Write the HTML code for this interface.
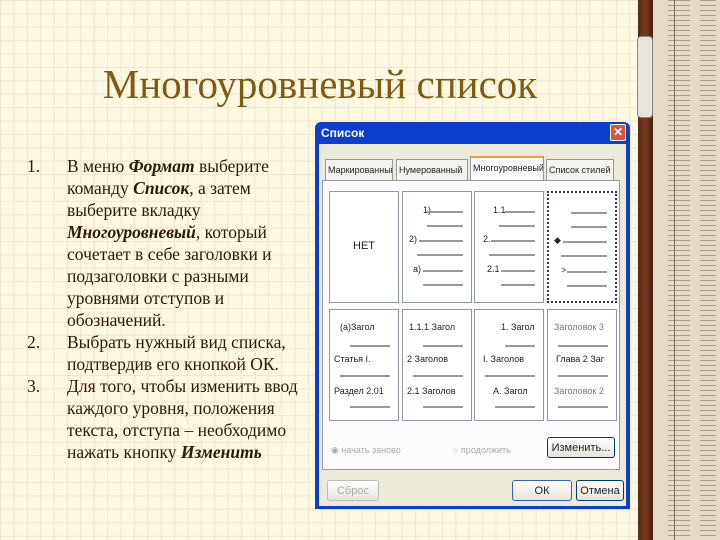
<!DOCTYPE html>
<html><head><meta charset="utf-8"><style>
*{margin:0;padding:0;box-sizing:border-box}
body{width:720px;height:540px;overflow:hidden;position:relative;
background-color:#fff8e3;
background-image:linear-gradient(#efe5c9 1px,transparent 1px),linear-gradient(90deg,#efe5c9 1px,transparent 1px);
background-size:13.4px 13.4px;font-family:"Liberation Serif",serif}
.title{position:absolute;left:0;width:640px;top:60px;text-align:center;font-size:41px;color:#7d5c12}
.list{position:absolute;left:0;top:155px;font-size:17.5px;line-height:22px;color:#2a1a08}
.row{position:relative;padding-left:67px;white-space:nowrap}
.row span.n{position:absolute;left:27px}
.dlg{position:absolute;left:315px;top:122px;width:315px;height:387px;background:#0a3fd0;border-radius:6px 6px 0 0}
.tb{height:22px;color:#fff;font:bold 12px "Liberation Sans",sans-serif;padding:4px 6px}
.x{position:absolute;right:4px;top:2px;width:16px;height:17px;background:#d8553a;border:1px solid #fff;border-radius:2px;color:#fff;font:bold 12px sans-serif;text-align:center}
.in{position:absolute;left:4px;top:22px;right:4px;bottom:3px;background:#ece9d8;font-family:"Liberation Sans",sans-serif;font-size:9px;color:#222}
.tab{position:absolute;top:15px;height:22px;border:1px solid #919b9c;border-bottom:none;background:#f4f3ee;padding:5px 2px;white-space:nowrap;overflow:hidden}
.panel{position:absolute;left:3px;top:36px;width:298px;height:290px;background:#fcfcfe;border:1px solid #919b9c}
.c{position:absolute;background:#fff;border:1px solid #8a9aa6;width:70px;height:112px}
.l{position:absolute;height:2px;background:#999;right:8px}
.btn{position:absolute;border:1px solid #003c74;border-radius:3px;background:linear-gradient(#fff,#e6e3d8);text-align:center;font-size:11px;line-height:20px;height:21px}
.ruler{position:absolute;left:638px;top:0;width:82px;height:540px;background:#e6dcc6}
.brown{position:absolute;left:638px;top:0;width:15px;height:540px;background:linear-gradient(90deg,#5a2a18,#7a3a22,#4a2010)}
.ticks{position:absolute;left:668px;top:0;width:22px;height:540px;background-image:repeating-linear-gradient(#a89d8a 0 1px,transparent 1px 5px)}
.ticks2{position:absolute;left:700px;top:0;width:16px;height:540px;background-image:repeating-linear-gradient(#a89d8a 0 1px,transparent 1px 5px)}
</style></head><body>
<div class="title">Многоуровневый список</div>
<div class="list">
<div class="row"><span class="n">1.</span>В меню <b><i>Формат</i></b> выберите<br>команду <b><i>Список</i></b>, а затем<br>выберите вкладку<br><b><i>Многоуровневый</i></b>, который<br>сочетает в себе заголовки и<br>подзаголовки с разными<br>уровнями отступов и<br>обозначений.</div>
<div class="row"><span class="n">2.</span>Выбрать нужный вид списка,<br>подтвердив его кнопкой ОК.</div>
<div class="row"><span class="n">3.</span>Для того, чтобы изменить ввод<br>каждого уровня, положения<br>текста, отступа – необходимо<br>нажать кнопку <b><i>Изменить</i></b></div>
</div>
<div class="dlg"><div class="tb">Список</div><div class="x">✕</div>
<div class="in">
<div class="tab" style="left:6px;width:68px">Маркированный</div>
<div class="tab" style="left:77px;width:72px">Нумерованный</div>
<div class="tab" style="left:151px;width:74px;top:12px;height:25px;background:#fcfcfe;border-top:2px solid #f0a030">Многоуровневый</div>
<div class="tab" style="left:227px;width:68px">Список стилей</div>
<div class="panel">
<div class="c" style="left:6px;top:10px"><div style="position:absolute;top:48px;width:100%;text-align:center;font-size:11px">НЕТ</div></div>
<div class="c" style="left:79px;top:10px"><span style="position:absolute;left:20px;top:13px">1)</span><div class="l" style="top:19px;width:36px"></div><div class="l" style="top:33px;width:36px"></div><span style="position:absolute;left:6px;top:42px">2)</span><div class="l" style="top:48px;width:44px"></div><div class="l" style="top:62px;width:46px"></div><span style="position:absolute;left:10px;top:72px">a)</span><div class="l" style="top:78px;width:40px"></div><div class="l" style="top:92px;width:40px"></div></div>
<div class="c" style="left:151px;top:10px"><span style="position:absolute;left:18px;top:13px">1.1.</span><div class="l" style="top:19px;width:30px"></div><div class="l" style="top:33px;width:36px"></div><span style="position:absolute;left:8px;top:42px">2.</span><div class="l" style="top:48px;width:44px"></div><div class="l" style="top:62px;width:46px"></div><span style="position:absolute;left:12px;top:72px">2.1</span><div class="l" style="top:78px;width:34px"></div><div class="l" style="top:92px;width:34px"></div></div>
<div class="c" style="left:224px;top:10px;border:2px dotted #335"><div class="l" style="top:19px;width:36px"></div><div class="l" style="top:33px;width:36px"></div><span style="position:absolute;left:5px;top:42px">◆</span><div class="l" style="top:48px;width:44px"></div><div class="l" style="top:62px;width:46px"></div><span style="position:absolute;left:12px;top:72px">&gt;</span><div class="l" style="top:78px;width:40px"></div><div class="l" style="top:92px;width:40px"></div></div>
<div class="c" style="left:6px;top:128px"><span style="position:absolute;left:10px;top:12px">(a)Загол</span><div class="l" style="top:35px;width:40px"></div><span style="position:absolute;left:4px;top:44px">Статья I.</span><div class="l" style="top:65px;width:50px"></div><span style="position:absolute;left:4px;top:76px">Раздел 2.01</span><div class="l" style="top:96px;width:40px"></div></div>
<div class="c" style="left:79px;top:128px"><span style="position:absolute;left:6px;top:12px">1.1.1 Загол</span><div class="l" style="top:35px;width:40px"></div><span style="position:absolute;left:4px;top:44px">2 Заголов</span><div class="l" style="top:65px;width:50px"></div><span style="position:absolute;left:4px;top:76px">2.1 Заголов</span><div class="l" style="top:96px;width:40px"></div></div>
<div class="c" style="left:151px;top:128px"><span style="position:absolute;left:26px;top:12px">1. Загол</span><div class="l" style="top:35px;width:30px"></div><span style="position:absolute;left:8px;top:44px">I. Заголов</span><div class="l" style="top:65px;width:50px"></div><span style="position:absolute;left:18px;top:76px">A. Загол</span><div class="l" style="top:96px;width:40px"></div></div>
<div class="c" style="left:224px;top:128px"><span style="position:absolute;left:6px;top:12px;color:#777">Заголовок 3</span><div class="l" style="top:35px;width:50px"></div><span style="position:absolute;left:8px;top:44px">Глава 2 Заг</span><div class="l" style="top:65px;width:50px"></div><span style="position:absolute;left:6px;top:76px;color:#777">Заголовок 2</span><div class="l" style="top:96px;width:50px"></div></div>
<div style="position:absolute;left:8px;top:264px;color:#aaa">◉ начать заново</div>
<div style="position:absolute;left:130px;top:264px;color:#aaa">○ продолжить</div>
<div class="btn" style="left:224px;top:256px;width:68px">Изменить...</div>
</div>
<div class="btn" style="left:8px;top:336px;width:52px;color:#aaa;border-color:#bbb">Сброс</div>
<div class="btn" style="left:193px;top:336px;width:60px;border-color:#3060c0">ОК</div>
<div class="btn" style="left:257px;top:336px;width:48px">Отмена</div>
</div></div>
<div class="ruler"></div><div class="ticks"></div><div class="ticks2"></div>
<div style="position:absolute;left:674px;top:0;width:1px;height:540px;background:#7a6f5e"></div>
<div class="brown"></div>
<div style="position:absolute;left:637px;top:36px;width:16px;height:82px;background:#e8e4dc;border:1px solid #888;border-radius:4px"></div>
</body></html>
